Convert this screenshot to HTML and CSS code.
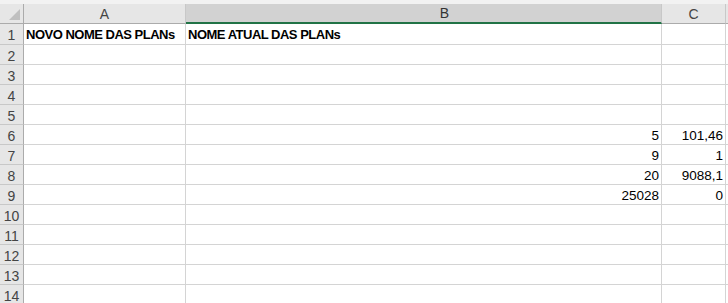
FILE: index.html
```html
<!DOCTYPE html>
<html lang="pt-BR">
<head>
  <meta charset="UTF-8">
  <title>Planilha</title>
  <link rel="stylesheet" href="styles.css">
</head>
<body>
  <div class="topo"></div>
  <div class="grade" id="grade">
    <div class="canto"><span class="triangulo"></span></div>
    <div class="cab">A</div>
    <div class="cab sel">B</div>
    <div class="cab">C</div>
    <div class="cab resto"></div>
  </div>

  <script>
    // linhas da planilha: [A, B, C]
    const linhas = [
      ['NOVO NOME DAS PLANs', 'NOME ATUAL DAS PLANs', ''],
      ['', '', ''], ['', '', ''], ['', '', ''], ['', '', ''],
      ['', '5', '101,46'],
      ['', '9', '1'],
      ['', '20', '9088,1'],
      ['', '25028', '0'],
      ['', '', ''], ['', '', ''], ['', '', ''], ['', '', ''], ['', '', '']
    ];

    const grade = document.getElementById('grade');
    linhas.forEach((l, i) => {
      let html = '<div class="num">' + (i + 1) + '</div>';
      l.forEach(v => {
        const numero = v !== '' && !isNaN(v.replace(',', '.'));
        let cls = 'cel';
        if (i === 0) cls += ' titulo';
        if (numero) cls += ' dir';
        html += '<div class="' + cls + '">' + v + '</div>';
      });
      html += '<div class="cel resto"></div>';
      grade.insertAdjacentHTML('beforeend', html);
    });
  </script>
</body>
</html>
```

FILE: styles.css
```css
body {
  margin: 0;
  background-color: #fff;
  font-family: "Liberation Sans", Arial, sans-serif;
  font-size: 13px;
  color: #000;
  overflow: hidden;
}
.topo {
  height: 4px;
  background-color: #f2f2f2;
}
.grade {
  display: grid;
  grid-template-columns: 24px 162px 476px 64px 2px;
  grid-template-rows: 20px 21px;
  grid-auto-rows: 20px;
}
.canto {
  background-color: #e6e6e6;
  border-right: 1px solid #ababab;
  border-bottom: 1px solid #ababab;
  box-sizing: border-box;
  position: relative;
}
.triangulo {
  position: absolute;
  right: 3px;
  bottom: 3px;
  width: 0;
  height: 0;
  border-left: 11px solid transparent;
  border-bottom: 11px solid #bfbfbf;
}
.cab {
  background-color: #e6e6e6;
  border-right: 1px solid #c8c8c8;
  border-bottom: 1px solid #ababab;
  box-sizing: border-box;
  text-align: center;
  color: #444;
  line-height: 20px;
  font-size: 14px;
}
.cab.sel {
  background-color: #d2d2d2;
  border-bottom: 2px solid #217346;
  color: #333;
  text-align: right;
  padding-right: 212px;
  line-height: 19px;
}
.num {
  background-color: #e6e6e6;
  border-right: 1px solid #ababab;
  border-bottom: 1px solid #c8c8c8;
  box-sizing: border-box;
  color: #444;
  text-align: center;
  padding-top: 2px;
  line-height: 18px;
  font-size: 14px;
}
.cel {
  border-right: 1px solid #d4d4d4;
  border-bottom: 1px solid #d4d4d4;
  box-sizing: border-box;
  padding: 2px 2px 0;
  line-height: 18px;
  font-size: 13.5px;
  white-space: nowrap;
  overflow: hidden;
}
.titulo {
  font-weight: bold;
  font-size: 13px;
  letter-spacing: -0.5px;
}
.dir {
  text-align: right;
}
.resto {
  border-right: none;
}
```
